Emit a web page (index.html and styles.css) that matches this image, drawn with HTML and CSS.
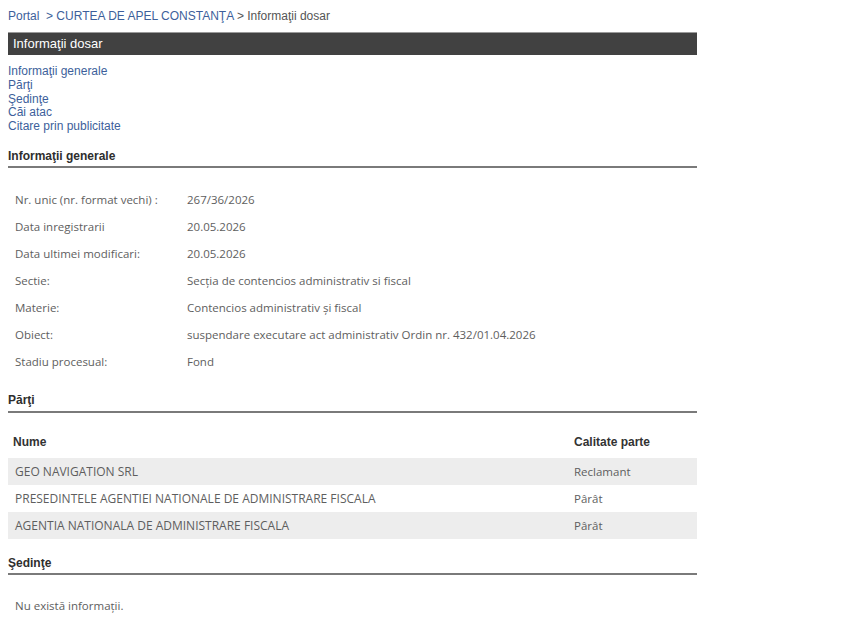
FILE: index.html
```html
<!DOCTYPE html>
<html lang="ro">
<head>
<meta charset="utf-8">
<title>Informații dosar</title>
<link rel="stylesheet" href="styles.css">
</head>
<body>
<div class="page">
  <div class="crumbs">
    <a href="#">Portal</a>&nbsp; <a href="#">&gt; CURTEA DE APEL CONSTANŢA</a> <span class="here">&gt; Informaţii dosar</span>
  </div>

  <div class="titlebar">Informaţii dosar</div>

  <nav class="toc">
    <a href="#">Informaţii generale</a>
    <a href="#">Părţi</a>
    <a href="#">Şedinţe</a>
    <a href="#">Căi atac</a>
    <a href="#">Citare prin publicitate</a>
  </nav>

  <h2 class="section first">Informaţii generale</h2>
  <table class="info">
    <tr><td class="lbl">Nr. unic (nr. format vechi) :</td><td>267/36/2026</td></tr>
    <tr><td class="lbl">Data inregistrarii</td><td>20.05.2026</td></tr>
    <tr><td class="lbl">Data ultimei modificari:</td><td>20.05.2026</td></tr>
    <tr><td class="lbl">Sectie:</td><td>Secţia de contencios administrativ si fiscal</td></tr>
    <tr><td class="lbl">Materie:</td><td>Contencios administrativ şi fiscal</td></tr>
    <tr><td class="lbl">Obiect:</td><td>suspendare executare act administrativ Ordin nr. 432/01.04.2026</td></tr>
    <tr><td class="lbl">Stadiu procesual:</td><td>Fond</td></tr>
  </table>

  <h2 class="section">Părţi</h2>
  <table class="parts">
    <thead>
      <tr><th class="name">Nume</th><th>Calitate parte</th></tr>
    </thead>
    <tbody>
      <tr class="alt"><td class="party">GEO NAVIGATION SRL</td><td>Reclamant</td></tr>
      <tr><td class="party">PRESEDINTELE AGENTIEI NATIONALE DE ADMINISTRARE FISCALA</td><td>Pârât</td></tr>
      <tr class="alt"><td class="party">AGENTIA NATIONALA DE ADMINISTRARE FISCALA</td><td>Pârât</td></tr>
    </tbody>
  </table>

  <h2 class="section last">Şedinţe</h2>
  <p class="empty">Nu există informaţii.</p>
</div>
</body>
</html>
```

FILE: styles.css
```css
html, body {
  margin: 0;
  padding: 0;
  background: #fff;
}

body {
  padding: 8px;
  font-family: "Liberation Sans", Arial, sans-serif;
  font-size: 12px;
  color: #333;
}

.page {
  width: 689px;
}

a {
  color: #3d5f9b;
  text-decoration: none;
}

.crumbs {
  line-height: 16px;
  font-size: 12px;
}

.crumbs .here {
  color: #555;
}

.titlebar {
  margin-top: 8px;
  height: 23px;
  line-height: 21px;
  border-top: 1px solid #9a9a9a;
  background: #414141;
  color: #fff;
  font-size: 13px;
  padding-left: 5px;
  box-sizing: border-box;
}

.toc {
  margin-top: 10px;
  display: flex;
  flex-direction: column;
  line-height: 13.75px;
}

.section {
  margin: 18px 0 0;
  padding-bottom: 4px;
  font-size: 12px;
  line-height: 14px;
  font-weight: bold;
  color: #2e2e2e;
  border-bottom: 2px solid #7a7a7a;
}

.section.first {
  margin-top: 15px;
  padding-bottom: 3px;
}

.section.last {
  margin-top: 17px;
  padding-bottom: 3px;
}

table {
  border-collapse: collapse;
  width: 100%;
  font-family: "Open Sans", "Liberation Sans", sans-serif;
  font-size: 11.5px;
  color: #5e5e5e;
}

td, th {
  height: 27px;
  padding: 0 7px;
  text-align: left;
  vertical-align: middle;
}

.info {
  margin-top: 18px;
}

.info .lbl {
  width: 158px;
}

.parts {
  margin-top: 18px;
}

.parts th {
  height: 22px;
  font-family: "Liberation Sans", Arial, sans-serif;
  font-size: 12px;
  font-weight: bold;
  color: #333;
  padding-top: 0;
  padding-bottom: 5px;
}

.parts th.name {
  padding-left: 5px;
}

.parts td.party {
  font-size: 12px;
}

.parts td:last-child,
.parts th:last-child {
  width: 116px;
}

.parts .alt td {
  background: #ededed;
}

.empty {
  margin: 23px 0 0;
  padding-left: 7px;
  font-family: "Open Sans", "Liberation Sans", sans-serif;
  font-size: 11.5px;
  line-height: 15px;
  color: #5e5e5e;
}
```
